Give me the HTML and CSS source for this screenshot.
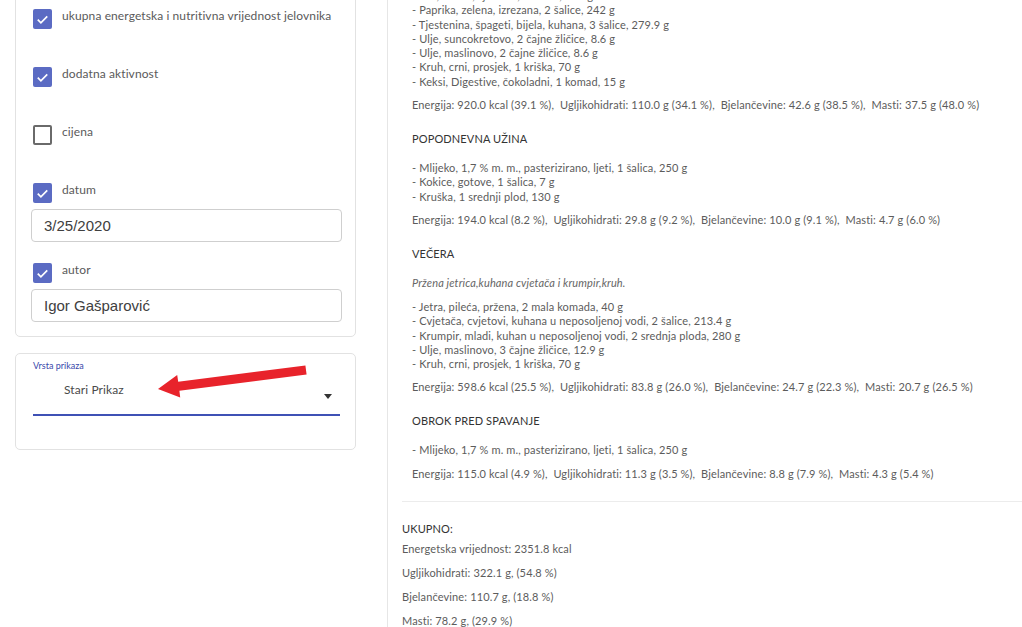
FILE: index.html
```html
<!DOCTYPE html>
<html lang="hr">
<head>
<meta charset="utf-8">
<title>Jelovnik</title>
<link rel="stylesheet" href="styles.css">
</head>
<body>
<div class="page">
  <aside class="side">
    <div class="card card-options">
      <div class="opt">
        <span class="cb on"><svg viewBox="0 0 20 20" width="19" height="19"><path d="M5 10.2l3.3 3.3L15 6.8" fill="none" stroke="#fff" stroke-width="1.8"/></svg></span>
        <span class="opt-label">ukupna energetska i nutritivna vrijednost jelovnika</span>
      </div>
      <div class="opt">
        <span class="cb on"><svg viewBox="0 0 20 20" width="19" height="19"><path d="M5 10.2l3.3 3.3L15 6.8" fill="none" stroke="#fff" stroke-width="1.8"/></svg></span>
        <span class="opt-label">dodatna aktivnost</span>
      </div>
      <div class="opt">
        <span class="cb"></span>
        <span class="opt-label">cijena</span>
      </div>
      <div class="opt opt-field">
        <span class="cb on"><svg viewBox="0 0 20 20" width="19" height="19"><path d="M5 10.2l3.3 3.3L15 6.8" fill="none" stroke="#fff" stroke-width="1.8"/></svg></span>
        <span class="opt-label">datum</span>
      </div>
      <div class="input">3/25/2020</div>
      <div class="opt opt-field">
        <span class="cb on"><svg viewBox="0 0 20 20" width="19" height="19"><path d="M5 10.2l3.3 3.3L15 6.8" fill="none" stroke="#fff" stroke-width="1.8"/></svg></span>
        <span class="opt-label">autor</span>
      </div>
      <div class="input last">Igor Gašparović</div>
    </div>

    <div class="card card-select">
      <div class="sel-label">Vrsta prikaza</div>
      <div class="select">
        <span class="sel-value">Stari Prikaz</span>
        <span class="caret"></span>
      </div>
      <svg class="arrow" width="341" height="97" viewBox="0 0 341 97">
        <polygon points="142,35 164.2,43.6 163.4,36.8 290.6,20.5 289.4,11.5 162.2,27.8 161.2,21 " fill="#e8232b"/>
      </svg>
    </div>
  </aside>

  <main class="content">
    <section class="meal">
      <ul class="foods">
        <li>- Luk, crveni, sjeckani, 1 šalica, 160 g</li>
        <li>- Paprika, zelena, izrezana, 2 šalice, 242 g</li>
        <li>- Tjestenina, špageti, bijela, kuhana, 3 šalice, 279.9 g</li>
        <li>- Ulje, suncokretovo, 2 čajne žličice, 8.6 g</li>
        <li>- Ulje, maslinovo, 2 čajne žličice, 8.6 g</li>
        <li>- Kruh, crni, prosjek, 1 kriška, 70 g</li>
        <li>- Keksi, Digestive, čokoladni, 1 komad, 15 g</li>
      </ul>
      <p class="energy">Energija: 920.0 kcal (39.1 %),&nbsp; Ugljikohidrati: 110.0 g (34.1 %),&nbsp; Bjelančevine: 42.6 g (38.5 %),&nbsp; Masti: 37.5 g (48.0 %)</p>
    </section>

    <section class="meal">
      <h3 class="meal-title">POPODNEVNA UŽINA</h3>
      <ul class="foods">
        <li>- Mlijeko, 1,7 % m. m., pasterizirano, ljeti, 1 šalica, 250 g</li>
        <li>- Kokice, gotove, 1 šalica, 7 g</li>
        <li>- Kruška, 1 srednji plod, 130 g</li>
      </ul>
      <p class="energy">Energija: 194.0 kcal (8.2 %),&nbsp; Ugljikohidrati: 29.8 g (9.2 %),&nbsp; Bjelančevine: 10.0 g (9.1 %),&nbsp; Masti: 4.7 g (6.0 %)</p>
    </section>

    <section class="meal">
      <h3 class="meal-title">VEČERA</h3>
      <p class="desc">Pržena jetrica,kuhana cvjetača i krumpir,kruh.</p>
      <ul class="foods">
        <li>- Jetra, pileća, pržena, 2 mala komada, 40 g</li>
        <li>- Cvjetača, cvjetovi, kuhana u neposoljenoj vodi, 2 šalice, 213.4 g</li>
        <li>- Krumpir, mladi, kuhan u neposoljenoj vodi, 2 srednja ploda, 280 g</li>
        <li>- Ulje, maslinovo, 3 čajne žličice, 12.9 g</li>
        <li>- Kruh, crni, prosjek, 1 kriška, 70 g</li>
      </ul>
      <p class="energy">Energija: 598.6 kcal (25.5 %),&nbsp; Ugljikohidrati: 83.8 g (26.0 %),&nbsp; Bjelančevine: 24.7 g (22.3 %),&nbsp; Masti: 20.7 g (26.5 %)</p>
    </section>

    <section class="meal">
      <h3 class="meal-title">OBROK PRED SPAVANJE</h3>
      <ul class="foods">
        <li>- Mlijeko, 1,7 % m. m., pasterizirano, ljeti, 1 šalica, 250 g</li>
      </ul>
      <p class="energy">Energija: 115.0 kcal (4.9 %),&nbsp; Ugljikohidrati: 11.3 g (3.5 %),&nbsp; Bjelančevine: 8.8 g (7.9 %),&nbsp; Masti: 4.3 g (5.4 %)</p>
    </section>

    <hr class="rule">

    <section class="total">
      <h4 class="total-title">UKUPNO:</h4>
      <p>Energetska vrijednost: 2351.8 kcal</p>
      <p>Ugljikohidrati: 322.1 g, (54.8 %)</p>
      <p>Bjelančevine: 110.7 g, (18.8 %)</p>
      <p>Masti: 78.2 g, (29.9 %)</p>
    </section>
  </main>
</div>
</body>
</html>
```

FILE: styles.css
```css
* { box-sizing: border-box; }

html, body {
  margin: 0;
  padding: 0;
  background: #fff;
  overflow: hidden;
}

body {
  font-family: Lato, "Open Sans", sans-serif;
  color: #555;
}

.page {
  display: flex;
  align-items: stretch;
  height: 627px;
}

/* ---------- left side ---------- */
.side {
  width: 388px;
  flex: none;
  padding-left: 15px;
  border-right: 1px solid #e6e6e6;
}

.card {
  width: 341px;
  border: 1px solid #e2e2e2;
  border-radius: 5px;
  background: #fff;
}

.card-options {
  margin-top: -10px;
  padding: 18px 13px 14px 15px;
  display: flex;
  flex-direction: column;
}

.opt {
  display: flex;
  align-items: flex-start;
  gap: 10px;
  height: 20px;
  margin-left: 2px;
  margin-bottom: 38px;
}

.opt.opt-field { margin-bottom: 6px; }

.cb {
  width: 19px;
  height: 20px;
  flex: none;
  border: 2px solid #6a6a6a;
  border-radius: 2px;
  display: flex;
  align-items: center;
  justify-content: center;
}

.cb.on {
  background: #5b6bc3;
  border: none;
}

.opt-label {
  font-size: 12px;
  line-height: 14px;
  letter-spacing: 0.1px;
  color: #5a5a5a;
}

.input {
  height: 33px;
  border: 1px solid #cfcfcf;
  border-radius: 4px;
  padding: 0 12px;
  display: flex;
  align-items: center;
  font-family: "Liberation Sans", Arial, sans-serif;
  font-size: 15px;
  color: #404040;
  margin-bottom: 21px;
}

.input.last { margin-bottom: 0; }

.card-select {
  position: relative;
  margin-top: 16px;
  height: 97px;
  padding: 6px 15px 0 17px;
}

.sel-label {
  font-size: 9px;
  line-height: 11px;
  color: #3949ab;
}

.select {
  position: relative;
  height: 45px;
  border-bottom: 2px solid #3f51b5;
  padding-left: 31px;
  padding-top: 7px;
}

.sel-value {
  font-size: 12px;
  line-height: 14px;
  letter-spacing: 0.1px;
  color: #4a4a4a;
}

.caret {
  position: absolute;
  right: 8px;
  top: 23px;
  width: 0;
  height: 0;
  border-left: 4.5px solid transparent;
  border-right: 4.5px solid transparent;
  border-top: 5px solid #333;
}

.arrow {
  position: absolute;
  left: 0;
  top: 0;
  overflow: visible;
  pointer-events: none;
}

/* ---------- right content ---------- */
.content {
  flex: 1;
  min-width: 0;
  padding-left: 14px;
  font-size: 11px;
  letter-spacing: 0.13px;
  color: #5c5c5c;
  white-space: nowrap;
}

.meal {
  padding-left: 10px;
  margin-bottom: 20px;
}

.meal:first-child { margin-top: -11px; }

.foods {
  list-style: none;
  margin: 0 0 9px;
  padding: 0;
  line-height: 14.3px;
}

.energy {
  margin: 0;
  line-height: 14px;
}

.meal-title {
  margin: 0 0 15px;
  font-size: 11px;
  font-weight: normal;
  line-height: 14px;
  color: #333;
}

.desc {
  margin: 0 0 10px;
  line-height: 14px;
  font-style: italic;
  color: #666;
}

.meal:last-of-type { margin-bottom: 15px; }

.rule {
  margin: 0;
  border: none;
  border-top: 1px solid #ececec;
}

.total {
  padding-top: 20px;
}

.total-title {
  margin: 0 0 6px;
  font-size: 11px;
  font-weight: normal;
  line-height: 14px;
  color: #333;
}

.total p {
  margin: 0 0 10px;
  line-height: 14px;
}
```
